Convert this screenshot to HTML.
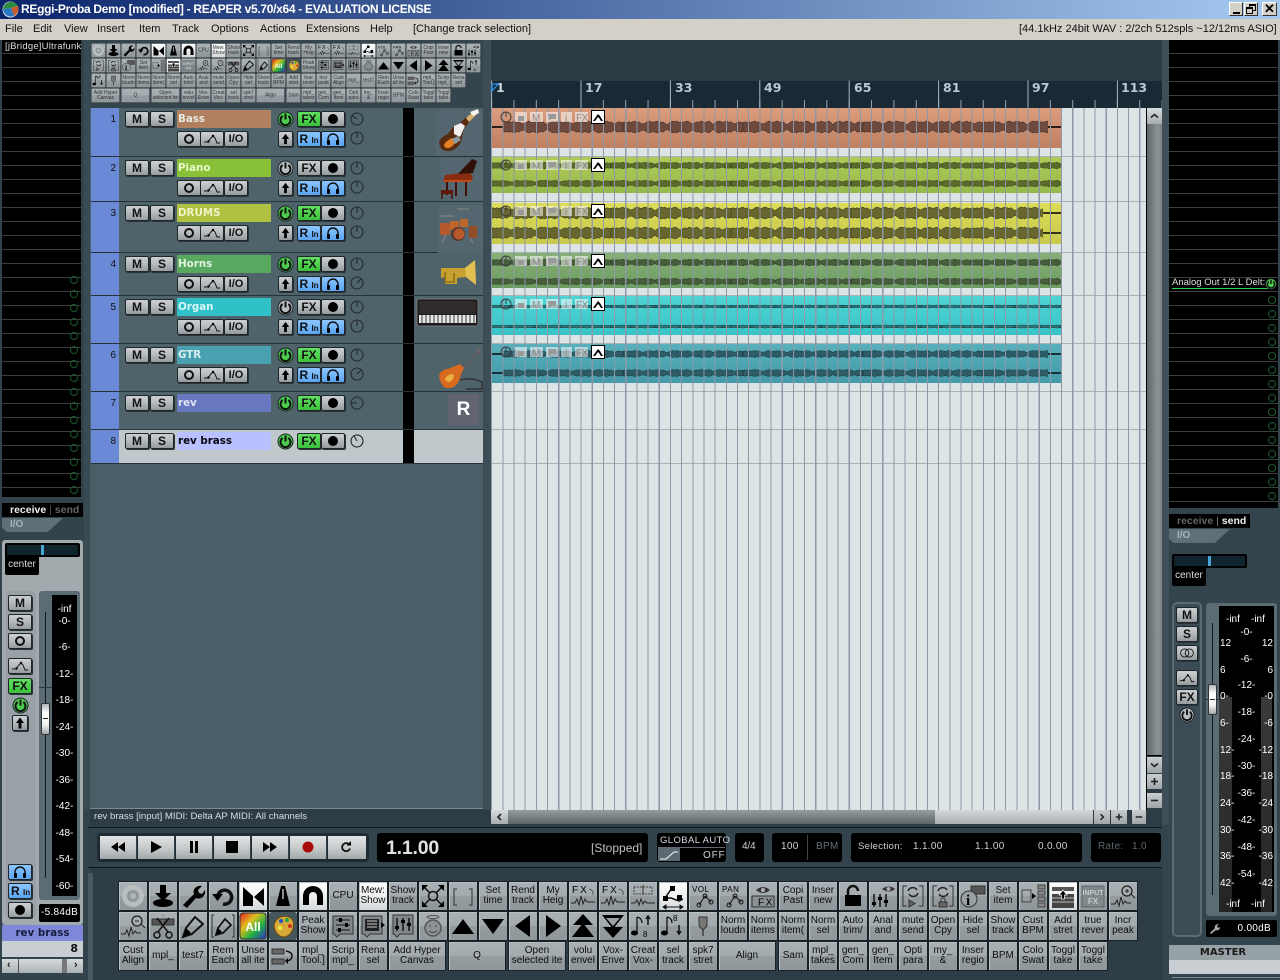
<!DOCTYPE html>
<html><head><meta charset="utf-8"><title>REAPER</title>
<style>
html,body{margin:0;padding:0;width:1280px;height:980px;overflow:hidden;background:#2e3d45;font-family:"Liberation Sans",sans-serif}
div,span,b,svg.p{position:absolute;box-sizing:border-box}
.tb{display:flex;flex-wrap:wrap;align-content:flex-start;position:absolute}
.tb div{position:relative;flex:none;width:30px;height:30px;border:1px solid #182126;background:linear-gradient(#a9b1b5 0,#a3abaf 49%,#959da1 50%,#8f979b 100%);font:10px/10.500px "Liberation Sans",sans-serif;color:#0c0c0c;text-align:center;display:flex;align-items:center;justify-content:center;overflow:hidden;white-space:pre-line;box-shadow:inset 1px 1px 0 #b8c0c3}
.tb div.w{width:58px;margin-right:2px}
.tb div.h{background:linear-gradient(#fff,#eef0f1 50%,#d4d8da)}
.tb svg{width:28px;height:28px;position:absolute;left:0;top:0}
.top{left:90.5px;top:43px;width:782px;transform:scale(.5);transform-origin:0 0;filter:blur(.7px)}
.top div{color:#333}
.bot{left:118px;top:881px;width:1022px}
.tr{left:91px;width:392px;background:#4f636b;border-bottom:1px solid #27333a}
.st{left:0;top:0;bottom:0;width:28px;background:#6a8ad8;color:#111;font:10px "Liberation Sans",sans-serif;text-align:right;padding:6px 3px 0 0}
.bk{left:312px;top:0;bottom:0;width:11px;background:#000}
.x{width:24px;height:16px;background:linear-gradient(#ccd0d2,#b4b9bc 50%,#959b9e);border:1px solid #1e262a;border-radius:2px;color:#111;font:bold 12px/14px "Liberation Sans",sans-serif;text-align:center;box-shadow:1px 1px 0 #2a3338}
.x svg{position:absolute;left:0;top:0;width:22px;height:14px}
.r1{top:3px}.r2{top:23px}
.M{left:34px}.S{left:59px}.F{left:206px}.R{left:230px}.O{left:86px}.E{left:109px}.I{left:133px;font-size:11px}.U{left:187px;width:15px}.N{left:206px}.H{left:230px}
.g{background:linear-gradient(#62e062,#3cc03c);}
.bl{background:linear-gradient(#8cc6ff,#5aa4f0)}
.nm{left:86px;top:2px;width:94px;height:18px;font:bold 10.300px/19px "DejaVu Sans",sans-serif;padding-left:1px;color:#e8e8e0}
svg.p{overflow:visible}
.pw{left:186px;top:3px;width:17px;height:17px}
.k1{left:259px;top:4px;width:14px;height:14px}.k2{left:259px;top:23px;width:14px;height:14px}
.rec::after{content:"";position:absolute;left:6px;top:2px;width:10px;height:10px;background:#000;border-radius:50%}
.oo::after{content:"";position:absolute;left:6px;top:2px;width:10px;height:10px;border:2.5px solid #111;border-radius:50%;box-sizing:border-box}
.w10{color:#fff;font:10px "Liberation Sans",sans-serif;white-space:pre}
.itm{left:491px;width:570px}
.bk2{background:#000;border-radius:3px}
.tx{color:#cfd3d5;font:10px "Liberation Sans",sans-serif;white-space:pre;letter-spacing:.3px}
.tp{top:836px;width:37px;height:23px;background:linear-gradient(#e2e4e5,#c8cccd 50%,#a2a7a9);border-right:1px solid #33434b}
.tp svg{position:absolute;left:8px;top:2px;width:20px;height:18px}
.ar{background:linear-gradient(#c8cdcf,#9ea5a8)}
.ar svg{position:absolute;left:0;top:0;width:100%;height:100%}
</style></head>
<body>
<svg width="0" height="0" style="position:absolute"><defs>
<symbol id="pw" viewBox="0 0 17 17"><circle cx="8.500" cy="8.500" r="7.500" fill="currentColor" stroke="#1a2226"/><path d="M5.600 5a5 5 0 1 0 5.800 0" fill="none" stroke="#111" stroke-width="2"/><path d="M8.500 2.500v6" stroke="#111" stroke-width="2"/></symbol>
<symbol id="kn" viewBox="0 0 14 14"><circle cx="7" cy="7" r="6" fill="none" stroke="#232c30" stroke-width="1.100"/><path d="M7 7V1" stroke="#232c30" stroke-width="1.100"/></symbol>
<symbol id="env" viewBox="0 0 22 14"><path d="M3 10h4l3-4 2-2 2 2 2 5 3 0" fill="none" stroke="#111" stroke-width="1"/><circle cx="7.500" cy="9.500" r="1.200"/><circle cx="12" cy="4" r="1.200"/></symbol>
<symbol id="hp" viewBox="0 0 22 14"><path d="M6 9V7a5 5 0 0 1 10 0v2" fill="none" stroke="#111" stroke-width="1.400"/><rect x="5" y="8" width="3" height="5" rx="1"/><rect x="14" y="8" width="3" height="5" rx="1"/></symbol>
<symbol id="up" viewBox="0 0 14 14"><path d="M7 1.500 3 7h2.500v5.500h3V7H11z"/></symbol>
<symbol id="spk" viewBox="0 0 28 28"><circle cx="14" cy="14" r="11" fill="#b9bfc1"/><circle cx="14" cy="14" r="6" fill="#8f979a"/><circle cx="14" cy="14" r="3" fill="#b0b6b8"/></symbol>
<symbol id="dl" viewBox="0 0 28 28"><path d="M11 3h6v8h5l-8 8-8-8h5z"/><ellipse cx="14" cy="21" rx="10" ry="4"/></symbol>
<symbol id="wr" viewBox="0 0 28 28"><path d="M4 23 15 12c-2-5 3-9 8-8l-4 4 1 3 3 1 3-4c1 6-4 10-9 8L8 26z"/></symbol>
<symbol id="un" viewBox="0 0 28 28"><path d="M9 13a7 7 0 1 1 5 9" fill="none" stroke="#111" stroke-width="3.500"/><path d="M3 12h11l-5.500 7z"/></symbol>
<symbol id="bow" viewBox="0 0 28 28"><path d="M4 5 14 14v10H4zM25 6 15 15l10 9z"/></symbol>
<symbol id="me" viewBox="0 0 28 28"><path d="M12 4h4l5 20H7z"/><path d="M14 7v10" stroke="#bbb" stroke-width="1.500"/></symbol>
<symbol id="mg" viewBox="0 0 28 28"><path d="M14 4a10 10 0 0 1 10 10v9h-6v-9a4 4 0 0 0-8 0v9H4v-9A10 10 0 0 1 14 4z"/></symbol>
<symbol id="zx" viewBox="0 0 28 28"><circle cx="14" cy="14" r="4.500" fill="none" stroke="#111" stroke-width="1.500"/><path d="M11 11 4 4M17 11l7-7M11 17l-7 7M17 17l7 7" stroke="#111" stroke-width="1.500"/><path d="M3 3h6L3 9zM25 3h-6l6 6zM3 25h6l-6-6zM25 25h-6l6-6z"/></symbol>
<symbol id="br" viewBox="0 0 28 28"><path d="M8 7H5v16h3M20 7h3v16h-3" fill="none" stroke="#444" stroke-width="1.200"/></symbol>
<symbol id="fx" viewBox="0 0 28 28"><text x="3" y="11" font-family="Liberation Sans" font-size="10" letter-spacing="2">FX</text><path d="M2 21h4l2-4 2 6 2-9 2 8 2-5 2 3h8" fill="none" stroke="#222"/><path d="M20 7q5 1 4 6" fill="none" stroke="#555"/></symbol>
<symbol id="ev3" viewBox="0 0 28 28"><rect x="5" y="5" width="18" height="7" fill="none" stroke="#444" stroke-dasharray="2 1"/><path d="M2 21h4l2-3 2 5 2-6 2 5 2-3 2 2h8" fill="none" stroke="#222"/><path d="M14 3v10" stroke="#333"/></symbol>
<symbol id="sel" viewBox="0 0 28 28"><path d="M13 6 6 16h6l8 3 4-2" fill="none" stroke="#111" stroke-width="1.500"/><rect x="11" y="4" width="5" height="5" /><rect x="4" y="14" width="5" height="5"/><rect x="18" y="13" width="5" height="5"/><path d="M4 25h20M4 25l3-2v4zM24 25l-3-2v4z" stroke="#111"/></symbol>
<symbol id="vol" viewBox="0 0 28 28"><text x="3" y="10" font-family="Liberation Sans" font-size="8" letter-spacing=".5">VOL</text><path d="M10 23l6-9 6 6" fill="none" stroke="#111"/><circle cx="10" cy="23" r="2" fill="none" stroke="#111"/><circle cx="16" cy="14" r="2" fill="none" stroke="#111"/><circle cx="22" cy="20" r="2" fill="none" stroke="#111"/></symbol>
<symbol id="pan" viewBox="0 0 28 28"><text x="3" y="10" font-family="Liberation Sans" font-size="8" letter-spacing=".5">PAN</text><path d="M10 23l6-9 6 6" fill="none" stroke="#111"/><circle cx="10" cy="23" r="2" fill="none" stroke="#111"/><circle cx="16" cy="14" r="2" fill="none" stroke="#111"/><circle cx="22" cy="20" r="2" fill="none" stroke="#111"/></symbol>
<symbol id="eye" viewBox="0 0 28 28"><path d="M7 8q7-6 14 0-7 6-14 0z" fill="#333"/><circle cx="14" cy="8" r="2.200" fill="#aaa"/><rect x="3" y="14" width="22" height="11" fill="#8b9296" stroke="#333"/><text x="9" y="23.500" font-family="Liberation Sans" font-size="10" letter-spacing="1.500">FX</text></symbol>
<symbol id="lk" viewBox="0 0 28 28"><rect x="6" y="13" width="16" height="11"/><path d="M9 13V9a5 5 0 0 1 10 0" fill="none" stroke="#111" stroke-width="2.500"/></symbol>
<symbol id="emx" viewBox="0 0 28 28"><path d="M13 7q7-5 13 0-6 5-13 0z" fill="#333"/><circle cx="19.500" cy="7" r="2" fill="#aaa"/><path d="M5 12v13M11 12v13M17 12v13" stroke="#111" stroke-width="1.500"/><path d="M3 20h4v3H3zM9 15h4v3H9zM15 18h4v3h-4z"/></symbol>
<symbol id="lp1" viewBox="0 0 28 28"><path d="M8 4H4v20h4M20 4h4v20h-4" fill="none" stroke="#333"/><path d="M9 9a5 5 0 0 1 9-1M19 11a5 5 0 0 1-9 1" fill="none" stroke="#222" stroke-width="1.500"/><path d="M10 18v7l6-3.500z" fill="#666" stroke="#333"/></symbol>
<symbol id="lp2" viewBox="0 0 28 28"><path d="M8 4H4v20h4M20 4h4v20h-4" fill="none" stroke="#333"/><path d="M9 9a5 5 0 0 1 9-1M19 11a5 5 0 0 1-9 1" fill="none" stroke="#222" stroke-width="1.500"/><rect x="10" y="20" width="8" height="5" fill="#666" stroke="#333"/><path d="M12 20v-2a2 2 0 0 1 4 0v2" fill="none" stroke="#333"/></symbol>
<symbol id="inf" viewBox="0 0 28 28"><rect x="12" y="4" width="14" height="8" fill="#555" stroke="#333"/><circle cx="10" cy="17" r="8" fill="#98a0a4" stroke="#333"/><text x="7" y="23" font-family="Liberation Serif" font-weight="bold" font-size="15">i</text></symbol>
<symbol id="grd" viewBox="0 0 28 28"><rect x="3" y="8" width="9" height="12" fill="none" stroke="#444"/><path d="M13 11l4 3-4 3z"/><path d="M19 3h7v4h-7zM19 9h7v4h-7zM19 15h7v4h-7zM19 21h7v4h-7z" fill="#888" stroke="#444"/></symbol>
<symbol id="wh" viewBox="0 0 28 28"><path d="M3 5h22v4H3z" fill="#555"/><path d="M3 12h22v14H3z" fill="#444"/><path d="M3 16h22M3 20h22" stroke="#bbb"/><path d="M14 8l-4 5h2.500v4h3v-4H18z" stroke="#fff" stroke-width=".7" /></symbol>
<symbol id="ifx" viewBox="0 0 28 28"><rect x="3" y="4" width="22" height="21" fill="#80888c" stroke="#606669"/><text x="14" y="13" text-anchor="middle" font-family="Liberation Sans" font-weight="bold" font-size="7" fill="#c8cccd">INPUT</text><text x="14" y="22" text-anchor="middle" font-family="Liberation Sans" font-weight="bold" font-size="8" fill="#c8cccd">FX</text></symbol>
<symbol id="zp" viewBox="0 0 28 28"><circle cx="18" cy="9" r="5" fill="none" stroke="#222" stroke-width="1.300"/><path d="M16 9h4M18 7v4M22 12l4 4" stroke="#222"/><path d="M2 22h4l2-4 2 6 2-9 2 7 2-3 2 2h4" fill="none" stroke="#222"/></symbol>
<symbol id="zm" viewBox="0 0 28 28"><circle cx="18" cy="9" r="5" fill="none" stroke="#222" stroke-width="1.300"/><path d="M16 9h4M22 12l4 4" stroke="#222"/><path d="M2 22h4l2-4 2 6 2-9 2 7 2-3 2 2h4" fill="none" stroke="#222"/></symbol>
<symbol id="sc" viewBox="0 0 28 28"><rect x="3" y="7" width="22" height="6" fill="#555" stroke="#333"/><path d="M14 2v24" stroke="#888" stroke-dasharray="2 1"/><path d="M8 6l11 14M20 6 9 20" stroke="#111" stroke-width="1.500"/><circle cx="8" cy="23" r="3" fill="none" stroke="#111" stroke-width="1.500"/><circle cx="20" cy="23" r="3" fill="none" stroke="#111" stroke-width="1.500"/></symbol>
<symbol id="pe" viewBox="0 0 28 28"><path d="M4 25l3-9 9-11 8 7-11 10z" fill="none" stroke="#111" stroke-width="2"/><path d="M4 25l3-9 5 5z"/></symbol>
<symbol id="bp" viewBox="0 0 28 28"><path d="M5 3H3v22h2M23 3h2v22h-2" fill="none" stroke="#333"/><path d="M7 23l2-7 7-9 6 6-8 8z" fill="none" stroke="#111" stroke-width="1.800"/><path d="M7 23l2-7 4 4z"/></symbol>
<symbol id="all" viewBox="0 0 28 28"><defs><linearGradient id="ra" x1="0" y1="0" x2="1" y2="1"><stop offset="0" stop-color="#e02020"/><stop offset=".35" stop-color="#e0c020"/><stop offset=".65" stop-color="#20b040"/><stop offset="1" stop-color="#3030d0"/></linearGradient></defs><rect x="1" y="1" width="26" height="26" rx="3" fill="url(#ra)" stroke="#333"/><text x="14" y="19" text-anchor="middle" font-family="Liberation Sans" font-weight="bold" font-size="12" fill="#fff">All</text></symbol>
<symbol id="pal" viewBox="0 0 28 28"><rect x="0" y="0" width="28" height="28" rx="3" fill="#45565d"/><path d="M6 10c3-7 15-8 18-1 2 7-2 15-9 16-7 0-12-9-9-15z" fill="#d8a838" stroke="#6a4a10"/><circle cx="12" cy="9" r="2" fill="#2050d0"/><circle cx="18" cy="8" r="2" fill="#20a040"/><circle cx="21" cy="14" r="2" fill="#d03020"/><circle cx="11" cy="16" r="2.500" fill="#e8e040"/></symbol>
<symbol id="sl" viewBox="0 0 28 28"><path d="M4 4h20v18H11l-3 3-3-3H4z" fill="#80888c" stroke="#333"/><path d="M7 8h14M7 13h14M7 18h14" stroke="#111"/><path d="M10 6h3v4h-3zM16 11h3v4h-3zM9 16h3v4H9z"/></symbol>
<symbol id="ls" viewBox="0 0 28 28"><path d="M3 4h20v18H11l-3 3-3-3H3z" fill="#80888c" stroke="#333"/><rect x="6" y="7" width="14" height="12" fill="#222"/><path d="M8 9h10M8 12h10M8 15h10" stroke="#ccc"/><path d="M22 10l4 3-4 3z"/></symbol>
<symbol id="mx" viewBox="0 0 28 28"><path d="M4 3h20v19H11l-3 3-3-3H4z" fill="#80888c" stroke="#333"/><path d="M8 6v13M14 6v13M20 6v13" stroke="#111" stroke-width="1.500"/><path d="M6 14h4v3H6zM12 8h4v3h-4zM18 11h4v3h-4z"/></symbol>
<symbol id="sm" viewBox="0 0 28 28"><ellipse cx="14" cy="5" rx="6" ry="1.500" fill="none" stroke="#555"/><circle cx="14" cy="16" r="8" fill="#8a9296" stroke="#555" stroke-width="1.500"/><path d="M10 14h2M16 14h2M10 19q4 3 8 0" stroke="#444" fill="none"/></symbol>
<symbol id="aU" viewBox="0 0 28 28"><path d="M14 7 25 22H3z"/></symbol>
<symbol id="aD" viewBox="0 0 28 28"><path d="M14 22 25 7H3z"/></symbol>
<symbol id="aL" viewBox="0 0 28 28"><path d="M6 14 21 3v22z"/></symbol>
<symbol id="aR" viewBox="0 0 28 28"><path d="M22 14 7 3v22z"/></symbol>
<symbol id="dU" viewBox="0 0 28 28"><path d="M14 2 24 13H4zM14 11 25 25H3z"/></symbol>
<symbol id="dD" viewBox="0 0 28 28"><path d="M14 26 24 15H4zM14 17 25 3H3z"/><path d="M14 14 21 6H7z" fill="#9aa2a6"/></symbol>
<symbol id="n1" viewBox="0 0 28 28"><path d="M8 5v15M8 5q5 1 5 6" fill="none" stroke="#111" stroke-width="1.300"/><ellipse cx="5.500" cy="21" rx="3.500" ry="2.500"/><text x="14" y="25" font-family="Liberation Sans" font-size="8">8</text><path d="M19 13V5M17 7l2-3 2 3" fill="none" stroke="#111" stroke-width="1.500"/></symbol>
<symbol id="n2" viewBox="0 0 28 28"><path d="M8 5v15M8 5q5 1 5 6" fill="none" stroke="#111" stroke-width="1.300"/><ellipse cx="5.500" cy="21" rx="3.500" ry="2.500"/><text x="14" y="9" font-family="Liberation Sans" font-size="8">8</text><path d="M20 13v9M18 19l2 3 2-3" fill="none" stroke="#111" stroke-width="1.500"/></symbol>
<symbol id="pn" viewBox="0 0 28 28"><path d="M10 5h8v9l-4 4-4-4z" fill="#777" stroke="#333"/><path d="M14 18v6" stroke="#111"/></symbol>
<symbol id="rt" viewBox="0 0 28 28"><rect x="3" y="7" width="12" height="5" fill="#666" stroke="#333"/><rect x="3" y="17" width="12" height="5" fill="#666" stroke="#333"/><path d="M17 9q6 1 6 5t-5 5" fill="none" stroke="#111" stroke-width="1.500"/><path d="M19 16l-3 3 3 3z"/></symbol>
</defs></svg>

<!-- title -->
<div style="left:0;top:0;width:1280px;height:19px;background:linear-gradient(90deg,#0a246a,#a6caf0)"></div>
<svg class="p" style="left:2px;top:1px;width:17px;height:17px" viewBox="0 0 17 17"><circle cx="8.500" cy="8.500" r="8" fill="#e8e8e0"/><path d="M1 8a8 8 0 0 1 15-3L9 7z" fill="#2e8a3e"/><path d="M9 7l7-2a8 8 0 0 1-4 10z" fill="#c85a30"/><path d="M9 7l3 8a8 8 0 0 1-11-7z" fill="#2a78c0"/></svg>
<span style="left:21px;top:2px;color:#fff;font:bold 12px/15px 'Liberation Sans',sans-serif;letter-spacing:-.3px;white-space:pre">REggi-Proba Demo [modified] - REAPER v5.70/x64 - EVALUATION LICENSE</span>
<div style="left:1229px;top:2px;width:14px;height:14px;background:#d4d0c8;border:1px solid;border-color:#fff #333 #333 #fff"><span style="left:3px;top:9px;width:7px;height:2px;background:#000"></span></div>
<div style="left:1244px;top:2px;width:14px;height:14px;background:#d4d0c8;border:1px solid;border-color:#fff #333 #333 #fff"><span style="left:4px;top:1px;width:7px;height:7px;border:1px solid #000;border-top-width:2px"></span><span style="left:1px;top:4px;width:7px;height:7px;border:1px solid #000;border-top-width:2px;background:#d4d0c8"></span></div>
<div style="left:1262px;top:2px;width:15px;height:14px;background:#d4d0c8;border:1px solid;border-color:#fff #333 #333 #fff;font:bold 13px/12px 'Liberation Sans',sans-serif;text-align:center;color:#000">✕</div>

<!-- menu -->
<div style="left:0;top:19px;width:1280px;height:21px;background:#d4d0c8;font:11px/20px 'Liberation Sans',sans-serif;color:#111;white-space:pre"><span style="left:5px;top:0">File</span><span style="left:33px;top:0">Edit</span><span style="left:64px;top:0">View</span><span style="left:97px;top:0">Insert</span><span style="left:139px;top:0">Item</span><span style="left:172px;top:0">Track</span><span style="left:211px;top:0">Options</span><span style="left:260px;top:0">Actions</span><span style="left:306px;top:0">Extensions</span><span style="left:370px;top:0">Help</span><span style="left:413px;top:0">[Change track selection]</span><span style="left:1019px;top:0">[44.1kHz 24bit WAV : 2/2ch 512spls ~12/12ms ASIO]</span></div>

<!-- base panels -->
<div style="left:0;top:40px;width:90px;height:940px;background:#33434b"></div>
<div style="left:84px;top:40px;width:6px;height:770px;background:#3a4a52"></div>
<div style="left:90px;top:40px;width:400px;height:68px;background:#35454d"></div>
<div style="left:90px;top:108px;width:393px;height:700px;background:#4a5e67"></div>
<div style="left:90px;top:808px;width:393px;height:1px;background:#7a8b92"></div>
<div style="left:483px;top:40px;width:8px;height:770px;background:#3c4d55"></div>
<div style="left:491px;top:40px;width:672px;height:41px;background:#2b3a43"></div>
<div style="left:1162px;top:40px;width:118px;height:940px;background:#34444c"></div>
<div style="left:1162px;top:40px;width:7px;height:785px;background:#3e4f57"></div>

<!-- left docker -->
<div style="left:2px;top:40px;width:79px;height:457px;background:#000 repeating-linear-gradient(180deg,#000 0 13px,#3c3f40 13px 14px)"></div>
<div style="left:2px;top:40px;width:79px;height:13px;background:#000"></div>
<span style="left:5px;top:41px;color:#ddd;font:9.500px/12px 'Liberation Sans',sans-serif;letter-spacing:.2px;white-space:pre">[jBridge]Ultrafunk</span>
<svg class="p" style="left:68px;top:270px;width:12px;height:230px"><g fill="none" stroke="#1d5a2a"><circle cx="6" cy="10" r="3.500"/><circle cx="6" cy="24" r="3.500"/><circle cx="6" cy="38" r="3.500"/><circle cx="6" cy="52" r="3.500"/><circle cx="6" cy="66" r="3.500"/><circle cx="6" cy="80" r="3.500"/><circle cx="6" cy="94" r="3.500"/><circle cx="6" cy="108" r="3.500"/><circle cx="6" cy="122" r="3.500"/><circle cx="6" cy="136" r="3.500"/><circle cx="6" cy="150" r="3.500"/><circle cx="6" cy="164" r="3.500"/><circle cx="6" cy="178" r="3.500"/><circle cx="6" cy="192" r="3.500"/><circle cx="6" cy="206" r="3.500"/><circle cx="6" cy="220" r="3.500"/></g></svg>

<!-- left mixer -->
<div style="left:2px;top:503px;width:81px;height:14px;background:#000;font:bold 10.500px/14px 'Liberation Sans',sans-serif;color:#eee;padding-left:8px;white-space:pre">receive <span style="position:static;color:#555;font-weight:normal">|</span> <span style="position:static;color:#666">send</span></div>
<div style="left:2px;top:518px;width:61px;height:14px;background:#5e6f77;clip-path:polygon(0 0,100% 0,75% 100%,8% 100%,0 70%);color:#a8b4b8;font:bold 10px/14px 'Liberation Sans',sans-serif;padding-left:8px">I/O</div>
<div style="left:2px;top:540px;width:81px;height:385px;background:#a2aaad;border-radius:3px"></div>
<div style="left:5px;top:543px;width:75px;height:14px;background:#000;border-radius:2px"><span style="left:2px;top:2px;width:71px;height:10px;background:#10242e"></span><span style="left:36px;top:2px;width:3px;height:10px;background:#4aa4d8"></span></div>
<div style="left:5px;top:556px;width:34px;height:19px;background:#000;border-radius:0 0 2px 2px;color:#ddd;font:10px/18px 'Liberation Sans',sans-serif;text-align:center">center</div>
<div style="left:6px;top:591px;width:30px;height:327px;background:#98a1a5;border-radius:4px"></div>
<div class="x" style="left:8px;top:595px;height:16px">M</div>
<div class="x" style="left:8px;top:614px;height:16px">S</div>
<div class="x oo" style="left:8px;top:633px;height:16px"></div>
<div class="x" style="left:8px;top:658px;height:16px"><svg viewBox="0 0 22 14"><use href="#env"/></svg></div>
<div class="x g" style="left:8px;top:678px">FX</div>
<svg class="p" style="left:12px;top:697px;width:17px;height:17px;color:#4ccc4c"><use href="#pw"/></svg>
<div class="x" style="left:12px;top:715px;width:16px"><svg viewBox="0 0 14 14" style="width:14px"><use href="#up"/></svg></div>
<div class="x bl" style="left:8px;top:864px"><svg viewBox="0 0 22 14"><use href="#hp"/></svg></div>
<div class="x bl" style="left:8px;top:883px;text-align:left;padding-left:2px">R <span style="position:static;font-size:8px">In</span></div>
<div class="x rec" style="left:8px;top:902px"></div>
<div style="left:39px;top:591px;width:41px;height:309px;background:#5b6c74;border-radius:3px"></div>
<div style="left:45px;top:612px;width:1px;height:266px;background:#10181c"></div>
<div style="left:39px;top:687px;width:13px;height:1px;background:#2c383e"></div>
<div style="left:41px;top:703px;width:9px;height:32px;background:linear-gradient(#b0b6b8,#fff 30%,#f0f0f0 70%,#a0a6a8);border:1px solid #333;border-radius:2px"><span style="left:1px;top:14px;width:5px;height:1px;background:#222"></span></div>
<div style="left:52px;top:595px;width:25px;height:301px;background:#000"></div>
<div class="w10" style="left:52px;top:604px;width:25px;text-align:center">-inf</div>
<div class="w10" style="left:52px;top:608.700px;width:25px;text-align:center;line-height:26.500px">-0-
-6-
-12-
-18-
-24-
-30-
-36-
-42-
-48-
-54-
-60-</div>
<div class="w10" style="left:39px;top:904px;width:41px;height:18px;background:#000;border-radius:2px;text-align:center;line-height:18px;letter-spacing:.3px">-5.84dB</div>
<div style="left:2px;top:925px;width:81px;height:16px;background:#7f88d8;color:#181c40;font:bold 10.300px/16px 'DejaVu Sans',sans-serif;text-align:center">rev brass</div>
<div style="left:2px;top:941px;width:81px;height:16px;background:#c8ced1;color:#111;font:bold 11px/16px 'DejaVu Sans',sans-serif;text-align:right;padding-right:5px">8</div>
<div style="left:2px;top:959px;width:81px;height:14px;background:linear-gradient(#d6dbdd,#aab1b4);font:bold 11px/12px 'Liberation Sans',sans-serif;color:#222"><span style="left:5px;top:0">‹</span><span style="left:16px;top:0;width:1px;height:14px;background:#555"></span><span style="left:60px;top:0;width:5px;height:14px;background:#777"></span><span style="left:72px;top:0">›</span></div>
<div style="left:88px;top:873px;width:5px;height:107px;background:#47585f"></div>

<!-- top toolbar -->
<div class="tb top">
<div><svg><use href="#spk"/></svg></div><div><svg><use href="#dl"/></svg></div><div><svg><use href="#wr"/></svg></div><div><svg><use href="#un"/></svg></div><div class="h"><svg><use href="#bow"/></svg></div><div><svg><use href="#me"/></svg></div><div class="h"><svg><use href="#mg"/></svg></div><div>CPU</div><div class="h">Mew:
Show</div><div>Show
track</div><div><svg><use href="#zx"/></svg></div><div><svg><use href="#br"/></svg></div><div>Set
time</div><div>Rend
track</div><div>My
Heig</div><div><svg><use href="#fx"/></svg></div><div><svg><use href="#fx"/></svg></div><div><svg><use href="#ev3"/></svg></div><div class="h"><svg><use href="#sel"/></svg></div><div><svg><use href="#vol"/></svg></div><div><svg><use href="#pan"/></svg></div><div><svg><use href="#eye"/></svg></div><div>Copi
Past</div><div>Inser
new</div><div><svg><use href="#lk"/></svg></div><div><svg><use href="#emx"/></svg></div><div><svg><use href="#lp1"/></svg></div><div><svg><use href="#lp2"/></svg></div><div><svg><use href="#inf"/></svg></div><div>Set
item</div><div><svg><use href="#grd"/></svg></div><div class="h"><svg><use href="#wh"/></svg></div><div><svg><use href="#ifx"/></svg></div><div><svg><use href="#zp"/></svg></div>
<div><svg><use href="#zm"/></svg></div><div><svg><use href="#sc"/></svg></div><div><svg><use href="#pe"/></svg></div><div><svg><use href="#bp"/></svg></div><div><svg><use href="#all"/></svg></div><div><svg><use href="#pal"/></svg></div><div>Peak
Show</div><div><svg><use href="#sl"/></svg></div><div><svg><use href="#ls"/></svg></div><div><svg><use href="#mx"/></svg></div><div><svg><use href="#sm"/></svg></div><div><svg><use href="#aU"/></svg></div><div><svg><use href="#aD"/></svg></div><div><svg><use href="#aL"/></svg></div><div><svg><use href="#aR"/></svg></div><div><svg><use href="#dU"/></svg></div><div><svg><use href="#dD"/></svg></div><div><svg><use href="#n1"/></svg></div><div><svg><use href="#n2"/></svg></div><div><svg><use href="#pn"/></svg></div><div>Norm
loudn</div><div>Norm
items</div><div>Norm
item(</div><div>Norm
sel</div><div>Auto
trim/</div><div>Anal
and</div><div>mute
send</div><div>Open
Cpy</div><div>Hide
sel</div><div>Show
track</div><div>Cust
BPM</div><div>Add
stret</div><div>true
rever</div><div>Incr
peak</div>
<div>Cust
Align</div><div>mpl_</div><div>test7</div><div>Rem
Each</div><div>Unse
all ite</div><div><svg><use href="#rt"/></svg></div><div>mpl_
Tool.]</div><div>Scrip
mpl_</div><div>Rena
sel</div><div class="w">Add Hyper
Canvas</div><div class="w">Q</div><div class="w">Open
selected ite</div><div>volu
envel</div><div>Vox-
Enve</div><div>Creat
Vox-</div><div>sel
track</div><div>spk7
stret</div><div class="w">Align</div><div>Sam</div><div>mpl_
takes</div><div>gen_
Com</div><div>gen_
Item</div><div>Opti
para</div><div>my_
&amp;</div><div>Inser
regio</div><div>BPM</div><div>Colo
Swat</div><div>Toggl
take</div><div>Toggl
take</div>
</div>

<!-- tracks -->
<div class="tr" style="top:108px;height:49px"><div class="st">1</div><b class="x M r1">M</b><b class="x S r1">S</b><div class="nm" style="background:#b08060">Bass</div><svg class="p pw" style="color:#4ccc4c"><use href="#pw"/></svg><b class="x F r1 g">FX</b><b class="x R r1 rec"></b><svg class="p k1" style="transform:rotate(-55deg)"><use href="#kn"/></svg><b class="x O r2 oo"></b><b class="x E r2"><svg viewBox="0 0 22 14"><use href="#env"/></svg></b><b class="x I r2">I/O</b><b class="x U r2"><svg viewBox="0 0 14 14" style="width:13px"><use href="#up"/></svg></b><b class="x N r2 bl">R <span style="position:static;font-size:8px">In</span></b><b class="x H r2 bl"><svg viewBox="0 0 22 14"><use href="#hp"/></svg></b><svg class="p k2"><use href="#kn"/></svg><div class="bk"></div></div>
<div class="tr" style="top:157px;height:45px"><div class="st">2</div><b class="x M r1">M</b><b class="x S r1">S</b><div class="nm" style="background:#88c038;color:#e8f8c8">Piano</div><svg class="p pw" style="color:#b8bec0"><use href="#pw"/></svg><b class="x F r1">FX</b><b class="x R r1 rec"></b><svg class="p k1"><use href="#kn"/></svg><b class="x O r2 oo"></b><b class="x E r2"><svg viewBox="0 0 22 14"><use href="#env"/></svg></b><b class="x I r2">I/O</b><b class="x U r2"><svg viewBox="0 0 14 14" style="width:13px"><use href="#up"/></svg></b><b class="x N r2 bl">R <span style="position:static;font-size:8px">In</span></b><b class="x H r2 bl"><svg viewBox="0 0 22 14"><use href="#hp"/></svg></b><svg class="p k2"><use href="#kn"/></svg><div class="bk"></div></div>
<div class="tr" style="top:202px;height:51px"><div class="st">3</div><b class="x M r1">M</b><b class="x S r1">S</b><div class="nm" style="background:#b0c040;color:#eef4c8">DRUMS</div><svg class="p pw" style="color:#4ccc4c"><use href="#pw"/></svg><b class="x F r1 g">FX</b><b class="x R r1 rec"></b><svg class="p k1"><use href="#kn"/></svg><b class="x O r2 oo"></b><b class="x E r2"><svg viewBox="0 0 22 14"><use href="#env"/></svg></b><b class="x I r2">I/O</b><b class="x U r2"><svg viewBox="0 0 14 14" style="width:13px"><use href="#up"/></svg></b><b class="x N r2 bl">R <span style="position:static;font-size:8px">In</span></b><b class="x H r2 bl"><svg viewBox="0 0 22 14"><use href="#hp"/></svg></b><svg class="p k2"><use href="#kn"/></svg><div class="bk"></div></div>
<div class="tr" style="top:253px;height:43px"><div class="st">4</div><b class="x M r1">M</b><b class="x S r1">S</b><div class="nm" style="background:#58a860;color:#e0f4e0">Horns</div><svg class="p pw" style="color:#4ccc4c"><use href="#pw"/></svg><b class="x F r1 g">FX</b><b class="x R r1 rec"></b><svg class="p k1"><use href="#kn"/></svg><b class="x O r2 oo"></b><b class="x E r2"><svg viewBox="0 0 22 14"><use href="#env"/></svg></b><b class="x I r2">I/O</b><b class="x U r2"><svg viewBox="0 0 14 14" style="width:13px"><use href="#up"/></svg></b><b class="x N r2 bl">R <span style="position:static;font-size:8px">In</span></b><b class="x H r2 bl"><svg viewBox="0 0 22 14"><use href="#hp"/></svg></b><svg class="p k2" style="transform:rotate(45deg)"><use href="#kn"/></svg><div class="bk"></div></div>
<div class="tr" style="top:296px;height:48px"><div class="st">5</div><b class="x M r1">M</b><b class="x S r1">S</b><div class="nm" style="background:#30c0c8;color:#d8f8f8">Organ</div><svg class="p pw" style="color:#b8bec0"><use href="#pw"/></svg><b class="x F r1">FX</b><b class="x R r1 rec"></b><svg class="p k1"><use href="#kn"/></svg><b class="x O r2 oo"></b><b class="x E r2"><svg viewBox="0 0 22 14"><use href="#env"/></svg></b><b class="x I r2">I/O</b><b class="x U r2"><svg viewBox="0 0 14 14" style="width:13px"><use href="#up"/></svg></b><b class="x N r2 bl">R <span style="position:static;font-size:8px">In</span></b><b class="x H r2 bl"><svg viewBox="0 0 22 14"><use href="#hp"/></svg></b><svg class="p k2"><use href="#kn"/></svg><div class="bk"></div></div>
<div class="tr" style="top:344px;height:48px"><div class="st">6</div><b class="x M r1">M</b><b class="x S r1">S</b><div class="nm" style="background:#48a0b0;color:#d8f0f4">GTR</div><svg class="p pw" style="color:#4ccc4c"><use href="#pw"/></svg><b class="x F r1 g">FX</b><b class="x R r1 rec"></b><svg class="p k1"><use href="#kn"/></svg><b class="x O r2 oo"></b><b class="x E r2"><svg viewBox="0 0 22 14"><use href="#env"/></svg></b><b class="x I r2">I/O</b><b class="x U r2"><svg viewBox="0 0 14 14" style="width:13px"><use href="#up"/></svg></b><b class="x N r2 bl">R <span style="position:static;font-size:8px">In</span></b><b class="x H r2 bl"><svg viewBox="0 0 22 14"><use href="#hp"/></svg></b><svg class="p k2" style="transform:rotate(45deg)"><use href="#kn"/></svg><div class="bk"></div></div>
<div class="tr" style="top:392px;height:38px"><div class="st">7</div><b class="x M r1">M</b><b class="x S r1">S</b><div class="nm" style="background:#6878c0;color:#dfe4f8">rev</div><svg class="p pw" style="color:#4ccc4c"><use href="#pw"/></svg><b class="x F r1 g">FX</b><b class="x R r1 rec"></b><svg class="p k1" style="transform:rotate(-90deg)"><use href="#kn"/></svg><div class="bk"></div></div>
<div class="tr" style="top:430px;height:34px;background:#c0c8cc"><div class="st">8</div><b class="x M r1">M</b><b class="x S r1">S</b><div class="nm" style="background:#b8c0ff;color:#05050c">rev brass</div><svg class="p pw" style="color:#4ccc4c"><use href="#pw"/></svg><b class="x F r1 g">FX</b><b class="x R r1 rec"></b><svg class="p k1" style="transform:rotate(-30deg)"><use href="#kn"/></svg><div class="bk"></div></div>

<!-- thumbnails -->
<svg class="p" style="left:414px;top:108px;width:69px;height:320px" viewBox="0 0 69 320">
<rect x="22" y="2" width="46" height="46" fill="#546770"/>
<path d="M26 38c-3-6 3-10 8-12l5-7 6-3 7-7 5 3-7 9-2 7c1 7-7 16-15 15-4 0-6-2-7-5z" fill="#5a2a10"/><path d="M30 38c0-4 5-6 8-8l4 2c-1 5-6 9-10 8z" fill="#e08020"/><path d="M40 18l7-3 4 3-5 11-6-3z" fill="#f0f0f0"/><path d="M52 10l8-7 3 3-8 8z" fill="#d8b070"/><path d="M56 4l8-3 1 4-6 3z" fill="#f4f4f0"/><path d="M38 31l6-3 3 4-6 4z" fill="#8a9aa0"/>
<rect x="27" y="50" width="42" height="42" fill="#546770"/><path d="M29 74l2-7 25-3 3 6-3 4z" fill="#8a2c10"/><path d="M44 66l14-15 5 2-4 12z" fill="#301008"/><path d="M33 73v14M52 74v14M42 74v14" stroke="#401008" stroke-width="2"/><rect x="30" y="72" width="27" height="2" fill="#c04a18"/><rect x="27" y="82" width="12" height="4" fill="#601808"/><path d="M28 86v5M38 86v5" stroke="#401008" stroke-width="1.500"/>
<rect x="24" y="98" width="45" height="48" fill="#546770"/><path d="M26 108h14M43 101h12" stroke="#888a80" stroke-width="1"/><g opacity=".85"><rect x="26" y="115" width="10" height="12" rx="2" fill="#c85820"/><rect x="36" y="113" width="9" height="9" fill="#d06820"/><rect x="46" y="111" width="8" height="8" fill="#d06820"/><circle cx="44" cy="126" r="7" fill="#5a3020"/><circle cx="45" cy="126" r="5.500" fill="#c85820"/><rect x="55" y="118" width="8" height="12" fill="#a04818"/></g><path d="M32 127l-4 7M56 130l3 5" stroke="#888" /></svg>
<svg class="p" style="left:414px;top:250px;width:69px;height:145px" viewBox="0 0 69 145">
<path d="M27 18h24l10-8 1 25-10-8-9 1v6H31v-7l-4 1z" fill="#c8a030"/><path d="M31 22v10h9v-9" fill="none" stroke="#8a6a18" stroke-width="1.500"/><path d="M51 18l10-8 1 25-10-8z" fill="#e0c050"/>
<rect x="3" y="49" width="61" height="27" rx="2" fill="#1a1a1a" stroke="#777"/><rect x="5" y="51" width="57" height="13" fill="#302c2c"/><rect x="5" y="65" width="57" height="8" fill="#e8e8e8"/><path d="M8 65v8M12 65v8M16 65v8M20 65v8M24 65v8M28 65v8M32 65v8M36 65v8M40 65v8M44 65v8M48 65v8M52 65v8M56 65v8M60 65v8" stroke="#333" />
<path d="M66 100 45 122" stroke="#606060" stroke-width="2"/><path d="M62 98l5 1-1 5z" fill="#666"/><path d="M26 130c-3-6 2-10 7-11 4-1 8-3 13-5l4 4c-2 4-3 6-4 10-2 7-7 11-13 10-3 0-6-4-7-8z" fill="#d86a20"/><path d="M31 130c0-4 5-6 8-6 2 3-1 8-5 8z" fill="#e8b040"/><path d="M46 130q12-3 22 2v7H52" fill="none" stroke="#333" stroke-width="1.500"/>
</svg>
<div style="left:448px;top:394px;width:31px;height:31px;background:#62646f;color:#fff;font:bold 19px/31px 'Liberation Sans',sans-serif;text-align:center">R</div>

<!-- status -->
<span style="left:94px;top:811px;color:#d8dcde;font:9.600px/12px 'Liberation Sans',sans-serif;white-space:pre">rev brass [input] MIDI: Delta AP MIDI: All channels</span>

<!-- ruler -->
<div style="left:491px;top:81px;width:671px;height:27px;background:#1a2a35;color:#b4cad8;font:bold 12.500px/14px 'DejaVu Sans',sans-serif;white-space:pre"><span style="left:94px;top:0">17</span><span style="left:184px;top:0">33</span><span style="left:273px;top:0">49</span><span style="left:363px;top:0">65</span><span style="left:452px;top:0">81</span><span style="left:541px;top:0">97</span><span style="left:630px;top:0">113</span><span style="left:5px;top:0;color:#c8d8e0">1</span></div>
<svg class="p" style="left:491px;top:81px;width:671px;height:27px" viewBox="0 0 671 27"><line x1=".1" y1="23" x2="671" y2="23" stroke="#97a3b0" stroke-width="8" stroke-dasharray="1 21.350"/><line x1=".1" y1="13" x2="671" y2="13" stroke="#a8b8c4" stroke-width="27" stroke-dasharray="1 88.400"/><path d="M1 3h6L1 10z" fill="none" stroke="#2a90e8" stroke-width="1.300"/></svg>

<!-- arrange -->
<div style="left:491px;top:108px;width:655px;height:702px;background:#dce4e6"></div>
<div class="itm" style="top:108px;height:40px;background:linear-gradient(#dc9c7e,#be8060)"></div>
<div class="itm" style="top:157px;height:36px;background:linear-gradient(#b0cc58,#96b84a)"></div>
<div class="itm" style="top:203px;height:41px;background:linear-gradient(#dcdc58,#c8c84c)"></div>
<div class="itm" style="top:253px;height:35px;background:linear-gradient(#88b078,#6c9c60)"></div>
<div class="itm" style="top:296px;height:39px;background:linear-gradient(#50d4d4,#38c4c8)"></div>
<div class="itm" style="top:344px;height:39px;background:linear-gradient(#58b0bc,#449aa8)"></div>
<svg class="p" style="left:491px;top:108px;width:655px;height:702px" viewBox="0 0 655 702">
<defs>
<path id="wp" d="M0 4 2 3 4 4 6 3 8 4 10 3 12 2 14 4 16 3 18 5 20 6 22 5 24 3 26 2 28 3 30 4 32 3 34 2 36 3 38 4 40 3 42 5 44 7 46 5 48 3 50 2 52 3 54 2 56 4 58 3 60 4 62 3 64 2 66 3 68 5 70 6 72 4 74 3 76 4 78 2 80 3 82 4 84 3 86 2 88 4 90 7 92 4 94 3 96 2 98 3 100 4 102 3 104 2 106 4 108 3 110 5 112 6 114 4 116 3 118 4 120 4V16L118 17 116 16 114 17 112 14 110 15 108 17 106 16 104 18 102 17 100 16 98 17 96 18 94 17 92 16 90 13 88 16 86 18 84 17 82 16 80 17 78 18 76 16 74 17 72 16 70 14 68 15 66 17 64 18 62 17 60 16 58 17 56 16 54 18 52 17 50 18 48 17 46 15 44 13 42 15 40 17 38 16 36 17 34 18 32 17 30 16 28 17 26 18 24 17 22 15 20 14 18 15 16 17 14 16 12 18 10 17 8 16 6 17 4 16 2 17 0 16Z"/>
<pattern id="w1" width="120" height="20" patternUnits="userSpaceOnUse"><use href="#wp" fill="#6e4a3e" stroke="#3a2820" stroke-width=".6"/></pattern>
<pattern id="w2" width="120" height="20" patternUnits="userSpaceOnUse"><use href="#wp" fill="#5a6a2c" stroke="#2e3a18" stroke-width="1"/></pattern>
<pattern id="w3" width="120" height="20" patternUnits="userSpaceOnUse"><use href="#wp" fill="#66662e" stroke="#34341a" stroke-width=".6"/></pattern>
<pattern id="w4" width="120" height="20" patternUnits="userSpaceOnUse"><use href="#wp" fill="#465e3c" stroke="#243222" stroke-width="1"/></pattern>
<pattern id="w5" width="120" height="20" patternUnits="userSpaceOnUse"><use href="#wp" fill="#2c7478" stroke="#163c40" stroke-width="1"/></pattern>
<pattern id="w6" width="120" height="20" patternUnits="userSpaceOnUse"><use href="#wp" fill="#2e5c66" stroke="#183038" stroke-width=".8"/></pattern>
</defs>
<g>
<rect x="0" y="18" width="12" height="2" fill="#2a2018"/><rect x="555" y="18" width="15" height="2" fill="#2a2018"/>
<rect transform="translate(12,11.500) scale(1,.75)" width="545" height="20" fill="url(#w1)"/>
<rect x="0" y="56" width="570" height="3" fill="#2e3a18"/><rect x="0" y="74" width="570" height="3" fill="#2e3a18"/>
<rect transform="translate(0,53.500) scale(1,.4)" width="570" height="20" fill="url(#w2)"/>
<rect transform="translate(0,71.500) scale(1,.4)" width="570" height="20" fill="url(#w2)"/>
<rect x="0" y="104" width="570" height="2" fill="#34341a"/><rect x="0" y="124" width="570" height="2" fill="#34341a"/>
<rect transform="translate(0,97.500) scale(1,.75)" width="552" height="20" fill="url(#w3)"/>
<rect transform="translate(0,117.500) scale(1,.75)" width="552" height="20" fill="url(#w3)"/>
<rect x="0" y="153" width="570" height="3" fill="#243222"/><rect x="0" y="172" width="570" height="3" fill="#243222"/>
<rect transform="translate(0,150.500) scale(1,.4)" width="570" height="20" fill="url(#w4)"/>
<rect transform="translate(0,169.500) scale(1,.4)" width="570" height="20" fill="url(#w4)"/>
<rect x="0" y="197" width="570" height="3" fill="#163c40"/><rect x="0" y="217" width="570" height="3" fill="#163c40"/>
<rect transform="translate(0,196.500) scale(1,.2)" width="570" height="20" fill="url(#w5)"/>
<rect transform="translate(0,216.500) scale(1,.2)" width="570" height="20" fill="url(#w5)"/>
<rect x="0" y="245" width="570" height="2" fill="#183038"/><rect x="0" y="264" width="570" height="2" fill="#183038"/>
<rect transform="translate(12,241.500) scale(1,.45)" width="545" height="20" fill="url(#w6)"/>
<rect transform="translate(12,260.500) scale(1,.45)" width="545" height="20" fill="url(#w6)"/>
</g>
<g stroke="#a8b2b6"><path d="M570 48.500H655M0 48.500H570M0 93.500H655M0 144.500H655M0 187.500H655M0 235.500H655M0 283.500H655M0 321.500H655M0 355.500H655" fill="none"/></g>
<g fill="#dce4e6"><rect y="40" width="570" height="8"/><rect y="85" width="570" height="8"/><rect y="136" width="570" height="8"/><rect y="180" width="570" height="7"/><rect y="227" width="570" height="8"/></g>
<line x1=".1" y1="351" x2="655" y2="351" stroke="#8e98a8" stroke-width="702" stroke-dasharray="1.100 10.075" shape-rendering="crispEdges"/>
<!-- item header icons -->
<g id="h1" font-family="Liberation Sans" font-size="10" fill="#8a8a88">
<rect x="24" y="4" width="12" height="10" fill="#fff" opacity=".55"/><rect x="39" y="4" width="13" height="10" fill="#fff" opacity=".55"/><rect x="55" y="4" width="12" height="10" fill="#fff" opacity=".55"/><rect x="70" y="4" width="11" height="10" fill="#fff" opacity=".55"/><rect x="84" y="4" width="13" height="10" fill="#fff" opacity=".55"/>
<circle cx="15" cy="9" r="5" fill="none" stroke="#3a3a3a"/><path d="M15 9V4" stroke="#3a3a3a"/>
<rect x="27" y="8" width="6" height="5" fill="#999"/><text x="41" y="13">M</text><path d="M57 6h8v5h-5l-2 2z" fill="#999"/><text x="74" y="13">i</text><text x="85" y="13" letter-spacing="-.5">FX</text>
<rect x="100.500" y="2.500" width="13" height="13" fill="#fff" stroke="#000"/><path d="M102 13l5-7 2 2 3 5h-2l-2-3-1-1-3 4z" fill="#000"/></g>
<use href="#h1" y="48"/><use href="#h1" y="94"/><use href="#h1" y="144"/><use href="#h1" y="187"/><use href="#h1" y="235"/>
</svg>
<div style="left:1146px;top:108px;width:1px;height:702px;background:#000"></div>

<!-- v scroll -->
<div class="ar" style="left:1147px;top:108px;width:15px;height:16px;background:linear-gradient(#d8dcdd,#a6acae)"><svg viewBox="0 0 15 16"><path d="M4 9.500l3.500-3 3.500 3" fill="none" stroke="#222" stroke-width="1.600"/></svg></div>
<div style="left:1147px;top:124px;width:15px;height:632px;background:linear-gradient(90deg,#5e6669,#8c9397 70%,#7a8286);border-bottom:1px solid #000"></div>
<div class="ar" style="left:1147px;top:757px;width:15px;height:16px"><svg viewBox="0 0 15 16"><path d="M4 6.500l3.500 3 3.500-3" fill="none" stroke="#222" stroke-width="1.600"/></svg></div>
<div class="ar" style="left:1147px;top:774px;width:15px;height:15px"><svg viewBox="0 0 15 15"><path d="M4 7.500h7M7.500 4v7" stroke="#222" stroke-width="1.600"/></svg></div>
<div class="ar" style="left:1147px;top:793px;width:15px;height:15px"><svg viewBox="0 0 15 15"><path d="M4 7.500h7" stroke="#222" stroke-width="1.600"/></svg></div>
<!-- h scroll -->
<div class="ar" style="left:491px;top:810px;width:17px;height:14px;background:linear-gradient(#d8dcdd,#a6acae)"><svg viewBox="0 0 17 14"><path d="M10 4l-3 3 3 3" fill="none" stroke="#222" stroke-width="1.600"/></svg></div>
<div style="left:508px;top:810px;width:427px;height:14px;background:linear-gradient(#969da0,#5e666a)"></div>
<div style="left:935px;top:810px;width:158px;height:14px;background:linear-gradient(#d2d7d9,#a8aeb1)"></div>
<div class="ar" style="left:1093px;top:810px;width:17px;height:14px;border-left:1px solid #333"><svg viewBox="0 0 17 14"><path d="M7 4l3 3-3 3" fill="none" stroke="#222" stroke-width="1.600"/></svg></div>
<div class="ar" style="left:1110px;top:810px;width:17px;height:14px;border-left:1px solid #333"><svg viewBox="0 0 17 14"><path d="M5 7h7M8.500 3.500v7" stroke="#222" stroke-width="1.600"/></svg></div>
<div class="ar" style="left:1131px;top:810px;width:15px;height:14px;border-left:1px solid #333"><svg viewBox="0 0 15 14"><path d="M4 7h7" stroke="#222" stroke-width="1.600"/></svg></div>

<!-- transport -->
<div style="left:88px;top:827px;width:1074px;height:41px;background:#33434b;border-top:1px solid #10181c;border-bottom:1px solid #10181c"></div>
<div style="left:97px;top:833px;width:272px;height:29px;background:#1e2b32;border-radius:4px"></div>
<div class="tp" style="left:100px"><svg viewBox="0 0 20 18"><path d="M10 4 3 9l7 5zM17 4l-7 5 7 5z"/></svg></div>
<div class="tp" style="left:138px"><svg viewBox="0 0 20 18"><path d="M5 3l11 6-11 6z"/></svg></div>
<div class="tp" style="left:176px"><svg viewBox="0 0 20 18"><path d="M6 3h3v12H6zM11 3h3v12h-3z"/></svg></div>
<div class="tp" style="left:214px"><svg viewBox="0 0 20 18"><path d="M4 3h12v12H4z"/></svg></div>
<div class="tp" style="left:252px"><svg viewBox="0 0 20 18"><path d="M3 4l7 5-7 5zM10 4l7 5-7 5z"/></svg></div>
<div class="tp" style="left:290px"><svg viewBox="0 0 20 18"><circle cx="10" cy="9" r="5.500" fill="#a80a0a"/></svg></div>
<div class="tp" style="left:328px;width:38px;border-right:0"><svg viewBox="0 0 20 18"><path d="M13.500 7a4 4 0 1 0 .400 3.500" fill="none" stroke="#111" stroke-width="1.800"/><path d="M10.500 7.500h4.500V3z"/></svg></div>
<div class="bk2" style="left:377px;top:833px;width:271px;height:29px"></div>
<span style="left:386px;top:837px;color:#dfe2e3;font:bold 19.500px/22px 'Liberation Sans',sans-serif;letter-spacing:-.2px">1.1.00</span>
<span class="tx" style="left:591px;top:841px;font-size:12px;line-height:14px;color:#bfc3c5;letter-spacing:0">[Stopped]</span>
<div class="bk2" style="left:657px;top:833px;width:69px;height:29px;background:#000"><span style="left:1px;top:14px;width:67px;height:1px;background:#667"></span><span style="left:1px;top:15px;width:22px;height:13px;background:#5b6a72"></span></div>
<span class="tx" style="left:660px;top:835px;font-size:9.500px;line-height:11px;letter-spacing:.4px;color:#d4d8da">GLOBAL AUTO</span>
<svg class="p" style="left:659px;top:849px;width:20px;height:12px"><path d="M1 10h6l8-7h4" fill="none" stroke="#fff"/></svg>
<span class="tx" style="left:703px;top:850px;line-height:12px;letter-spacing:.8px">OFF</span>
<div class="bk2" style="left:735px;top:833px;width:29px;height:29px"></div><span class="tx" style="left:742px;top:841px;line-height:12px;letter-spacing:-.2px">4/4</span>
<div class="bk2" style="left:772px;top:833px;width:70px;height:29px"><span style="left:35px;top:2px;width:1px;height:25px;background:#444"></span></div>
<span class="tx" style="left:781px;top:841px;line-height:12px">100</span><span class="tx" style="left:816px;top:841px;line-height:12px;color:#62707a">BPM</span>
<div class="bk2" style="left:851px;top:833px;width:231px;height:29px"></div>
<span class="tx" style="left:858px;top:841px;line-height:12px;font-size:9.500px;letter-spacing:.3px">Selection:</span><span class="tx" style="left:913px;top:841px;line-height:12px">1.1.00</span><span class="tx" style="left:975px;top:841px;line-height:12px">1.1.00</span><span class="tx" style="left:1038px;top:841px;line-height:12px">0.0.00</span>
<div class="bk2" style="left:1091px;top:833px;width:70px;height:29px"></div>
<span class="tx" style="left:1098px;top:841px;line-height:12px;color:#5e6a70">Rate:</span><span class="tx" style="left:1132px;top:841px;line-height:12px;color:#5e6a70">1.0</span>

<!-- bottom toolbar -->
<div class="tb bot">
<div><svg><use href="#spk"/></svg></div><div><svg><use href="#dl"/></svg></div><div><svg><use href="#wr"/></svg></div><div><svg><use href="#un"/></svg></div><div class="h"><svg><use href="#bow"/></svg></div><div><svg><use href="#me"/></svg></div><div class="h"><svg><use href="#mg"/></svg></div><div>CPU</div><div class="h">Mew:
Show</div><div>Show
track</div><div><svg><use href="#zx"/></svg></div><div><svg><use href="#br"/></svg></div><div>Set
time</div><div>Rend
track</div><div>My
Heig</div><div><svg><use href="#fx"/></svg></div><div><svg><use href="#fx"/></svg></div><div><svg><use href="#ev3"/></svg></div><div class="h"><svg><use href="#sel"/></svg></div><div><svg><use href="#vol"/></svg></div><div><svg><use href="#pan"/></svg></div><div><svg><use href="#eye"/></svg></div><div>Copi
Past</div><div>Inser
new</div><div><svg><use href="#lk"/></svg></div><div><svg><use href="#emx"/></svg></div><div><svg><use href="#lp1"/></svg></div><div><svg><use href="#lp2"/></svg></div><div><svg><use href="#inf"/></svg></div><div>Set
item</div><div><svg><use href="#grd"/></svg></div><div class="h"><svg><use href="#wh"/></svg></div><div><svg><use href="#ifx"/></svg></div><div><svg><use href="#zp"/></svg></div>
<div><svg><use href="#zm"/></svg></div><div><svg><use href="#sc"/></svg></div><div><svg><use href="#pe"/></svg></div><div><svg><use href="#bp"/></svg></div><div><svg><use href="#all"/></svg></div><div><svg><use href="#pal"/></svg></div><div>Peak
Show</div><div><svg><use href="#sl"/></svg></div><div><svg><use href="#ls"/></svg></div><div><svg><use href="#mx"/></svg></div><div><svg><use href="#sm"/></svg></div><div><svg><use href="#aU"/></svg></div><div><svg><use href="#aD"/></svg></div><div><svg><use href="#aL"/></svg></div><div><svg><use href="#aR"/></svg></div><div><svg><use href="#dU"/></svg></div><div><svg><use href="#dD"/></svg></div><div><svg><use href="#n1"/></svg></div><div><svg><use href="#n2"/></svg></div><div><svg><use href="#pn"/></svg></div><div>Norm
loudn</div><div>Norm
items</div><div>Norm
item(</div><div>Norm
sel</div><div>Auto
trim/</div><div>Anal
and</div><div>mute
send</div><div>Open
Cpy</div><div>Hide
sel</div><div>Show
track</div><div>Cust
BPM</div><div>Add
stret</div><div>true
rever</div><div>Incr
peak</div>
<div>Cust
Align</div><div>mpl_</div><div>test7</div><div>Rem
Each</div><div>Unse
all ite</div><div><svg><use href="#rt"/></svg></div><div>mpl_
Tool.]</div><div>Scrip
mpl_</div><div>Rena
sel</div><div class="w">Add Hyper
Canvas</div><div class="w">Q</div><div class="w">Open
selected ite</div><div>volu
envel</div><div>Vox-
Enve</div><div>Creat
Vox-</div><div>sel
track</div><div>spk7
stret</div><div class="w">Align</div><div>Sam</div><div>mpl_
takes</div><div>gen_
Com</div><div>gen_
Item</div><div>Opti
para</div><div>my_
&amp;</div><div>Inser
regio</div><div>BPM</div><div>Colo
Swat</div><div>Toggl
take</div><div>Toggl
take</div>
</div>

<!-- right docker -->
<div style="left:1169px;top:40px;width:109px;height:468px;background:#000 repeating-linear-gradient(180deg,#000 0 13px,#3c3f40 13px 14px)"></div>
<div style="left:1172px;top:288px;width:96px;height:1px;background:#2cd050"></div>
<span style="left:1172px;top:278px;color:#ddd;font:9.500px/10px 'Liberation Sans',sans-serif;white-space:pre;background:#000">Analog Out 1/2 L Delt:</span>
<svg class="p" style="left:1265px;top:278px;width:12px;height:12px;color:#4ccc4c"><use href="#pw"/></svg>
<svg class="p" style="left:1266px;top:290px;width:12px;height:216px"><g fill="none" stroke="#1d5a2a"><circle cx="6" cy="10" r="3.500"/><circle cx="6" cy="24" r="3.500"/><circle cx="6" cy="38" r="3.500"/><circle cx="6" cy="52" r="3.500"/><circle cx="6" cy="66" r="3.500"/><circle cx="6" cy="80" r="3.500"/><circle cx="6" cy="94" r="3.500"/><circle cx="6" cy="108" r="3.500"/><circle cx="6" cy="122" r="3.500"/><circle cx="6" cy="136" r="3.500"/><circle cx="6" cy="150" r="3.500"/><circle cx="6" cy="164" r="3.500"/><circle cx="6" cy="178" r="3.500"/><circle cx="6" cy="192" r="3.500"/><circle cx="6" cy="206" r="3.500"/></g></svg>

<!-- right mixer -->
<div style="left:1169px;top:514px;width:81px;height:14px;background:#000;font:bold 10.500px/14px 'Liberation Sans',sans-serif;color:#666;padding-left:8px;white-space:pre">receive <span style="position:static;color:#777;font-weight:normal">|</span> <span style="position:static;color:#eee">send</span></div>
<div style="left:1169px;top:529px;width:61px;height:14px;background:#5e6f77;clip-path:polygon(0 0,100% 0,75% 100%,8% 100%,0 70%);color:#a8b4b8;font:bold 10px/14px 'Liberation Sans',sans-serif;padding-left:8px">I/O</div>
<div style="left:1172px;top:554px;width:75px;height:14px;background:#000;border-radius:2px"><span style="left:2px;top:2px;width:71px;height:10px;background:#10242e"></span><span style="left:36px;top:2px;width:3px;height:10px;background:#4aa4d8"></span></div>
<div style="left:1172px;top:567px;width:34px;height:19px;background:#000;border-radius:0 0 2px 2px;color:#ddd;font:10px/18px 'Liberation Sans',sans-serif;text-align:center">center</div>
<div style="left:1172px;top:602px;width:30px;height:335px;border:2px solid #5b6c74;border-radius:5px;background:#3c4c54"></div>
<div class="x" style="left:1176px;top:607px;width:22px">M</div>
<div class="x" style="left:1176px;top:626px;width:22px">S</div>
<div class="x" style="left:1176px;top:645px;width:22px"><svg viewBox="0 0 22 14" style="width:20px"><circle cx="8.500" cy="7" r="4.500" fill="none" stroke="#111"/><circle cx="13.500" cy="7" r="4.500" fill="none" stroke="#111"/></svg></div>
<div class="x" style="left:1176px;top:670px;width:22px"><svg viewBox="0 0 22 14" style="width:20px"><use href="#env"/></svg></div>
<div class="x" style="left:1176px;top:689px;width:22px">FX</div>
<svg class="p" style="left:1179px;top:707px;width:16px;height:16px;color:#b8bec0"><use href="#pw"/></svg>
<div style="left:1206px;top:603px;width:71px;height:313px;background:#5b6c74;border-radius:3px"></div>
<div style="left:1212px;top:623px;width:1px;height:272px;background:#10181c"></div>
<div style="left:1206px;top:699px;width:13px;height:1px;background:#2c383e"></div>
<div style="left:1208px;top:684px;width:9px;height:31px;background:linear-gradient(#b0b6b8,#fff 30%,#f0f0f0 70%,#a0a6a8);border:1px solid #333;border-radius:2px"><span style="left:1px;top:14px;width:5px;height:1px;background:#222"></span></div>
<div style="left:1219px;top:606px;width:55px;height:306px;background:#000"></div>
<div style="left:1219px;top:697px;width:13px;height:215px;background:linear-gradient(#3a3a3a,#242424)"></div>
<div style="left:1261px;top:697px;width:11px;height:215px;background:linear-gradient(#3a3a3a,#242424)"></div>
<div class="w10" style="left:1226px;top:614px">-inf</div><div class="w10" style="left:1251px;top:614px">-inf</div>
<div class="w10" style="left:1226px;top:899px">-inf</div><div class="w10" style="left:1251px;top:899px">-inf</div>
<div class="w10" style="left:1220px;top:631px;line-height:26.650px">12
6
0-
6-
12-
18-
24-
30-
36-
42-</div>
<div class="w10" style="left:1244px;top:631px;width:29px;text-align:right;line-height:26.650px">12
6
-0
-6
-12
-18
-24
-30
-36
-42</div>
<div class="w10" style="left:1230px;top:619.700px;width:33px;text-align:center;line-height:26.870px">-0-
-6-
-12-
-18-
-24-
-30-
-36-
-42-
-48-
-54-</div>
<div class="w10" style="left:1206px;top:920px;width:71px;height:17px;background:#000;border-radius:2px;text-align:right;line-height:17px;padding-right:6px;letter-spacing:.3px">0.00dB</div>
<svg class="p" style="left:1209px;top:923px;width:11px;height:11px;fill:#aaa"><path d="M1 10 6 5c-1-2 1-4 4-4L8 3l1 2 2-1c0 3-3 4-4 3l-5 4z"/></svg>
<div style="left:1169px;top:945px;width:111px;height:15px;background:#96a1a6;color:#1a1a1a;font:bold 10px/15px 'DejaVu Sans',sans-serif;text-align:center;padding-right:3px">MASTER</div>
<div style="left:1169px;top:960px;width:111px;height:14px;background:#c8ced1"></div>
<div style="left:1172px;top:977px;width:108px;height:1px;background:#788890"></div>
</body></html>
